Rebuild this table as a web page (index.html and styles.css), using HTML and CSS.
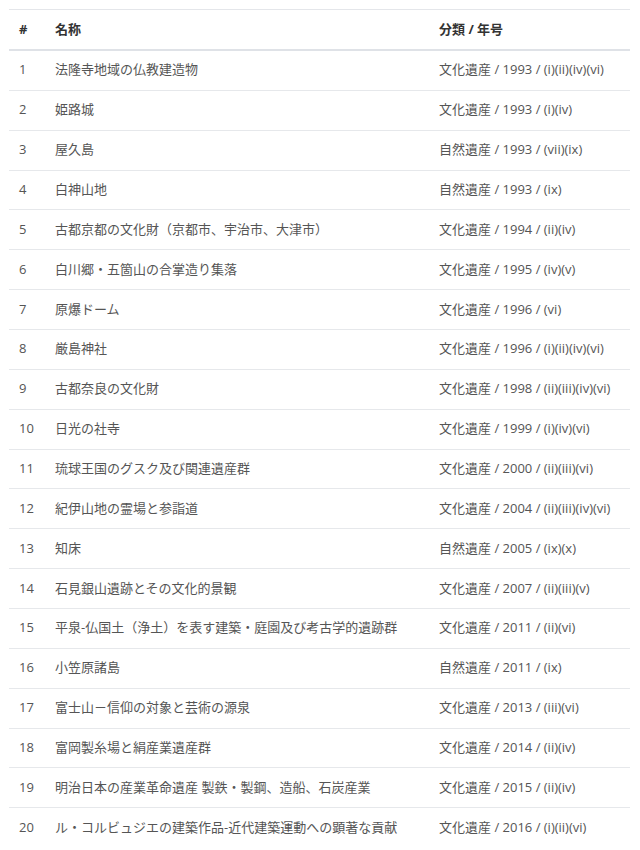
FILE: index.html
```html
<!DOCTYPE html>
<html lang="ja">
<head>
<meta charset="utf-8">
<title>世界遺産一覧</title>
<link rel="stylesheet" href="styles.css">
</head>
<body>
<div class="wrap">
<table class="list">
<colgroup><col class="c-num"><col class="c-name"><col class="c-cat"></colgroup>
<thead>
<tr><th>#</th><th>名称</th><th>分類 / 年号</th></tr>
</thead>
<tbody>
<tr><td>1</td><td>法隆寺地域の仏教建造物</td><td>文化遺産 / 1993 / (i)(ii)(iv)(vi)</td></tr>
<tr><td>2</td><td>姫路城</td><td>文化遺産 / 1993 / (i)(iv)</td></tr>
<tr><td>3</td><td>屋久島</td><td>自然遺産 / 1993 / (vii)(ix)</td></tr>
<tr><td>4</td><td>白神山地</td><td>自然遺産 / 1993 / (ix)</td></tr>
<tr><td>5</td><td>古都京都の文化財（京都市、宇治市、大津市）</td><td>文化遺産 / 1994 / (ii)(iv)</td></tr>
<tr><td>6</td><td>白川郷・五箇山の合掌造り集落</td><td>文化遺産 / 1995 / (iv)(v)</td></tr>
<tr><td>7</td><td>原爆ドーム</td><td>文化遺産 / 1996 / (vi)</td></tr>
<tr><td>8</td><td>厳島神社</td><td>文化遺産 / 1996 / (i)(ii)(iv)(vi)</td></tr>
<tr><td>9</td><td>古都奈良の文化財</td><td>文化遺産 / 1998 / (ii)(iii)(iv)(vi)</td></tr>
<tr><td>10</td><td>日光の社寺</td><td>文化遺産 / 1999 / (i)(iv)(vi)</td></tr>
<tr><td>11</td><td>琉球王国のグスク及び関連遺産群</td><td>文化遺産 / 2000 / (ii)(iii)(vi)</td></tr>
<tr><td>12</td><td>紀伊山地の霊場と参詣道</td><td>文化遺産 / 2004 / (ii)(iii)(iv)(vi)</td></tr>
<tr><td>13</td><td>知床</td><td>自然遺産 / 2005 / (ix)(x)</td></tr>
<tr><td>14</td><td>石見銀山遺跡とその文化的景観</td><td>文化遺産 / 2007 / (ii)(iii)(v)</td></tr>
<tr><td>15</td><td>平泉-仏国土（浄土）を表す建築・庭園及び考古学的遺跡群</td><td>文化遺産 / 2011 / (ii)(vi)</td></tr>
<tr><td>16</td><td>小笠原諸島</td><td>自然遺産 / 2011 / (ix)</td></tr>
<tr><td>17</td><td>富士山－信仰の対象と芸術の源泉</td><td>文化遺産 / 2013 / (iii)(vi)</td></tr>
<tr><td>18</td><td>富岡製糸場と絹産業遺産群</td><td>文化遺産 / 2014 / (ii)(iv)</td></tr>
<tr><td>19</td><td>明治日本の産業革命遺産 製鉄・製鋼、造船、石炭産業</td><td>文化遺産 / 2015 / (ii)(iv)</td></tr>
<tr><td>20</td><td>ル・コルビュジエの建築作品-近代建築運動への顕著な貢献</td><td>文化遺産 / 2016 / (i)(ii)(vi)</td></tr>
</tbody>
</table>
</div>
</body>
</html>
```
FILE: styles.css
```css
html, body {
  margin: 0;
  padding: 0;
  background: #ffffff;
}
.wrap {
  padding: 9px 10px 0 9px;
}
.list {
  width: 621px;
  border-collapse: collapse;
  table-layout: fixed;
  font-family: "Open Sans", "Noto Sans CJK JP", sans-serif;
  font-size: 13px;
  line-height: 18px;
  color: #555555;
}
.c-num { width: 36px; }
.c-name { width: 384px; }
.c-cat { width: auto; }
.list th,
.list td {
  text-align: left;
  padding: 0 10px;
  white-space: nowrap;
  vertical-align: middle;
}
.list th {
  height: 37px;
  padding-bottom: 2px;
  border-top: 1px solid #e4e6ea;
  border-bottom: 2px solid #dfe2e7;
  color: #333333;
  font-weight: 700;
}
.list td {
  height: 36.86px;
  padding-bottom: 2px;
  border-top: 1px solid #e6e8eb;
}
.list thead + tbody tr:first-child td {
  border-top: none;
}
```
